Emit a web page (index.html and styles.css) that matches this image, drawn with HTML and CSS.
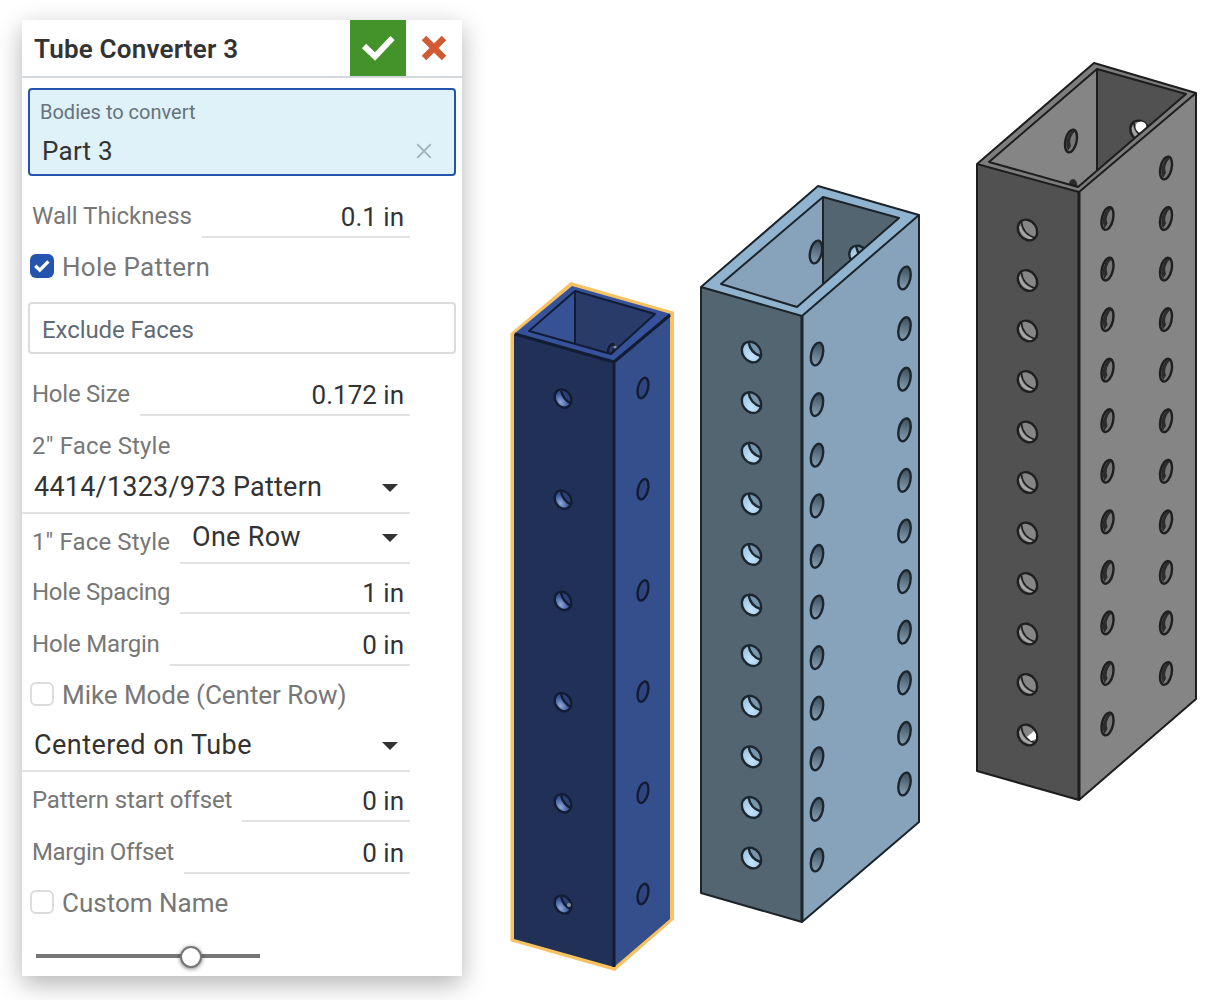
FILE: index.html
```html
<!DOCTYPE html>
<html lang="en">
<head>
<meta charset="utf-8">
<title>Tube Converter 3</title>
<link rel="stylesheet" href="styles.css">
</head>
<body>
<main class="workspace">
  <section class="panel">
    <header class="panel-header">
      <h1 class="title">Tube Converter 3</h1>
      <button class="accept" aria-label="Accept">
        <svg width="56" height="56" viewBox="0 0 56 56"><path d="M14 26 25 36.500 42.500 18" fill="none" stroke="#fff" stroke-width="6"/></svg>
      </button>
      <button class="cancel" aria-label="Cancel">
        <svg width="56" height="56" viewBox="0 0 56 56"><path d="M18 18 38 38M38 18 18 38" fill="none" stroke="#d15a34" stroke-width="6.4"/></svg>
      </button>
    </header>

    <div class="selection active">
      <div class="selection-label">Bodies to convert</div>
      <div class="selection-item">
        <span class="t-part">Part 3</span>
        <svg class="remove" width="16" height="16" viewBox="0 0 16 16"><path d="M1.2 1.2 14.8 14.8M14.8 1.2 1.2 14.8" stroke="#a3b1b8" stroke-width="1.8"/></svg>
      </div>
    </div>

    <div class="row first"><label>Wall Thickness</label><div class="value">0.1 in</div></div>
    <div class="check-row"><span class="checkbox checked"><svg width="24" height="24" viewBox="0 0 24 24"><path d="M5.3 11.8 9.8 16.2 18.4 7.4" fill="none" stroke="#fff" stroke-width="3.4"/></svg></span><span class="t-pattern">Hole Pattern</span></div>
    <div class="selection empty">Exclude Faces</div>
    <div class="row first"><label class="t-size">Hole Size</label><div class="value">0.172 in</div></div>
    <div class="stacked-label">2" Face Style</div>
    <div class="select"><span class="t-face-two">4414/1323/973 Pattern</span><i class="caret"></i></div>
    <div class="row short"><label class="t-face-one">1" Face Style</label><div class="select inline"><span>One Row</span><i class="caret"></i></div></div>
    <div class="row short"><label class="t-spacing">Hole Spacing</label><div class="value">1 in</div></div>
    <div class="row"><label class="t-margin">Hole Margin</label><div class="value">0 in</div></div>
    <div class="check-row"><span class="checkbox"></span><span class="t-mike">Mike Mode (Center Row)</span></div>
    <div class="select"><span class="t-centered">Centered on Tube</span><i class="caret"></i></div>
    <div class="row short"><label class="t-start">Pattern start offset</label><div class="value">0 in</div></div>
    <div class="row"><label class="t-margin-offset">Margin Offset</label><div class="value">0 in</div></div>
    <div class="check-row"><span class="checkbox"></span><span>Custom Name</span></div>
    <div class="slider"><span class="track"><span class="thumb"></span></span></div>
  </section>

  <svg class="viewport" width="758" height="1000" viewBox="462 0 758 1000">
    <defs>
      <linearGradient id="skySide" x1="0" y1="0" x2="0" y2="1"><stop offset="0" stop-color="#3e4d59"/><stop offset="1" stop-color="#86a0b5"/></linearGradient>
      <radialGradient id="skyFront" cx=".35" cy=".65" r=".6"><stop offset="0" stop-color="#c4e4fa"/><stop offset="1" stop-color="#9cc3e2"/></radialGradient>
      <radialGradient id="navyFront" cx=".25" cy=".6" r=".5"><stop offset="0" stop-color="#8fa8dc"/><stop offset="1" stop-color="#34508f"/></radialGradient>
      <clipPath id="skyBack"><path d="M823 197 899 218 823 284Z"/></clipPath>
      <clipPath id="grayBack"><path d="M1097 69 1186 94 1097 170Z"/></clipPath>
      <clipPath id="grayLeft"><path d="M989 162 1097 69V170L1078 187Z"/></clipPath>
      <g id="hole-navy-front">
        <ellipse rx="7.8" ry="9.6" transform="rotate(-32)" fill="url(#navyFront)"/>
        <path d="M-2-8Q5-11 8 0L8 5Q1 2-2-8Z" fill="#2b4178"/>
        <path d="M-2-8Q0 1 8 5" class="hole-line navy"/>
        <ellipse rx="7.8" ry="9.6" transform="rotate(-32)" class="hole-line navy"/>
      </g>
      <g id="hole-navy-side"><ellipse rx="5" ry="10.4" transform="rotate(14)" fill="#2e457d"/><ellipse rx="5" ry="10.4" transform="rotate(14)" class="hole-line navy"/></g>
      <g id="hole-sky-front">
        <ellipse rx="9" ry="11" transform="rotate(-35)" fill="url(#skyFront)"/>
        <path d="M-3-10Q6-12 9 0L9 4Q-1 1-3-10Z" fill="#7795ab"/>
        <path d="M-3-10Q-1 1 9 4" class="hole-line"/>
        <ellipse rx="9" ry="11" transform="rotate(-35)" class="hole-line"/>
      </g>
      <g id="hole-sky-side"><ellipse rx="5.8" ry="11.6" transform="rotate(13)" fill="url(#skySide)"/><ellipse rx="5.8" ry="11.6" transform="rotate(13)" class="hole-line"/></g>
      <g id="hole-gray-front">
        <ellipse rx="9" ry="11" transform="rotate(-35)" fill="#868686"/>
        <path d="M-8-4Q-6 6 5 9" fill="none" stroke="#a8a8a8" stroke-width="2.2"/>
        <path d="M-6-8Q-5 4 8 8" class="hole-line gray thin"/>
        <ellipse rx="9" ry="11" transform="rotate(-35)" class="hole-line gray"/>
      </g>
      <g id="hole-gray-side">
        <ellipse rx="5.6" ry="11.6" transform="rotate(13)" fill="#777"/>
        <path d="M1-11Q-8 0-3 10L0 5Q-3-2 4-10Z" fill="#2c2c2c"/>
        <ellipse rx="5.6" ry="11.6" transform="rotate(13)" class="hole-line gray"/>
      </g>
    </defs>

    <g class="tube navy">
      <path d="M514 335 571.500 286 670.500 314.500V918L614 967 514 938.500Z" fill="#36529a" stroke="#f8c262" stroke-width="7"/>
      <path d="M514 334 572 286 671 314 614 362Z" fill="#36529a"/>
      <path d="M514 334 614 362V967L514 939Z" fill="#203056"/>
      <path d="M614 362 670 314V919L614 967Z" fill="#354f8c"/>
      <path d="M529 331 575 291V344Z" fill="#375294"/>
      <path d="M575 291 655 314 611 354 575 344Z" fill="#293b69"/>
      <g class="edges"><path d="M529 331 575 291 655 314 611 354ZM575 291V344"/></g>
      <g class="edges strong"><path d="M515 334 614 362 670 315M614 362V967"/></g>
      <path d="M608 353Q608 345 613 344 617 347 612 353" class="hole-line navy"/>
      <circle cx="615" cy="347" r="1.6" fill="#8b8f99"/>
      <g data-hole="hole-navy-front" data-x="563" data-y="398.500" data-step="101.2" data-count="6"></g>
      <g data-hole="hole-navy-side" data-x="643" data-y="388" data-step="101.2" data-count="6"></g>
      <circle cx="569" cy="905" r="2" fill="#8b8f99"/>
    </g>

    <g class="tube sky">
      <path d="M701 287 818 186 919 215 802 316Z" fill="#90b3cf"/>
      <path d="M701 287 802 316V922L701 893Z" fill="#546572"/>
      <path d="M802 316 919 215V822L802 922Z" fill="#87a3bb"/>
      <path d="M721 284 823 197V284L797 307Z" fill="#87a3bb"/>
      <path d="M823 197 899 218 823 284Z" fill="#546572"/>
      <use href="#hole-sky-side" x="816" y="252"/>
      <g clip-path="url(#skyBack)"><use href="#hole-sky-front" x="859" y="256"/></g>
      <g class="edges"><path d="M721 284 823 197 899 218 797 307ZM823 197V284M701 287 818 186 919 215V822L802 922 701 893ZM701 287 802 316 919 215"/></g>
      <g class="edges strong"><path d="M802 316V921"/></g>
      <g data-hole="hole-sky-front" data-x="751.5" data-y="352" data-step="50.6" data-count="11"></g>
      <g data-hole="hole-sky-side" data-x="817" data-y="354" data-step="50.6" data-count="11"></g>
      <g data-hole="hole-sky-side" data-x="904.5" data-y="278" data-step="50.6" data-count="11"></g>
    </g>

    <g class="tube gray">
      <path d="M977 164 1094 63 1196 93 1079 192Z" fill="#7d7d7d"/>
      <path d="M977 164 1079 192V800L977 771Z" fill="#515151"/>
      <path d="M1079 192 1196 93V699L1079 800Z" fill="#858585"/>
      <path d="M989 162 1097 69V170L1078 187Z" fill="#858585"/>
      <path d="M1097 69 1186 94 1097 170Z" fill="#515151"/>
      <use href="#hole-gray-side" x="1071" y="141"/>
      <g clip-path="url(#grayBack)"><use href="#hole-gray-front" x="1140" y="131"/><circle cx="1141" cy="127" r="5.5" fill="#fff"/></g>
      <g clip-path="url(#grayLeft)"><ellipse cx="1073" cy="187" rx="4.500" ry="8" fill="#2c2c2c"/></g>
      <g class="edges"><path d="M989 162 1097 69 1186 94 1078 187ZM1097 69V170M977 164 1094 63 1196 93V699L1079 800 977 771ZM977 164 1079 192 1196 93"/></g>
      <g class="edges strong"><path d="M1079 192V799"/></g>
      <g data-hole="hole-gray-front" data-x="1027.5" data-y="230" data-step="50.5" data-count="11"></g>
      <g data-hole="hole-gray-side" data-x="1107.5" data-y="218.5" data-step="50.55" data-count="11"></g>
      <g data-hole="hole-gray-side" data-x="1166" data-y="168" data-step="50.55" data-count="11"></g>
      <path d="M1027 737 1034 731 1036 734 1036 739 1031 741Z" fill="#fff"/>
    </g>
  </svg>
</main>
<script src="holes.js"></script>
</body>
</html>
```
FILE: styles.css
```css
* { box-sizing: border-box; }
body {
  margin: 0;
  background: #fff;
  color: #333;
  font-family: Roboto, "Liberation Sans", sans-serif;
  font-size: 26px;
}
.workspace { display: flex; width: 1220px; height: 1000px; overflow: hidden; }
.panel {
  flex: none;
  width: 440px;
  height: 956px;
  margin: 20px 0 0 22px;
  background: #fff;
  box-shadow: 0 8px 24px rgba(0, 0, 0, .3);
  white-space: nowrap;
}
.viewport { flex: none; }

.panel-header { display: flex; height: 58px; border-bottom: 2px solid #d3d8dc; }
.title { flex: 1; margin: 0; padding: 1px 0 0 12px; font-size: 26px; font-weight: 600; line-height: 56px; letter-spacing: .2px; }
.accept, .cancel { width: 56px; height: 56px; padding: 0; border: 0; background: #fff; }
.accept { background: #43922a; }
.panel-header svg { display: block; }

.selection { margin: 0 6px; border: 2px solid #dcdcdc; border-radius: 4px; }
.selection.active { height: 88px; margin-top: 10px; padding: 6px 10px; background: #dff1f9; border-color: #2454ad; }
.selection-label { font-size: 20px; line-height: 32px; color: #66737b; }
.selection-item { display: flex; align-items: center; justify-content: space-between; height: 46px; padding: 0 12px 0 2px; }
.selection.empty { height: 52px; margin-top: 8px; padding: 1px 0 0 12px; line-height: 50px; font-size: 24px; letter-spacing: -.08px; color: #5f6b76; }

.row { display: flex; align-items: flex-end; gap: 10px; width: 388px; height: 52px; padding-left: 10px; }
.row.first { margin-top: 10px; }
.row.short { height: 50px; }
.row label { flex: none; height: 42px; line-height: 40px; font-size: 24px; color: #777; }
.value { flex: 1; height: 42px; padding-right: 6px; border-bottom: 2px solid #e2e2e2; line-height: 43px; text-align: right; }

.stacked-label { height: 48px; padding: 10px 0 0 10px; line-height: 40px; font-size: 24px; letter-spacing: .17px; color: #777; }
.select { display: flex; align-items: center; justify-content: space-between; width: 388px; height: 50px; padding: 0 12px 3px; border-bottom: 2px solid #e2e2e2; font-size: 27px; letter-spacing: .3px; }
.select.inline { flex: 1; width: auto; }
.caret { width: 16px; height: 8px; background: #333; clip-path: polygon(0 0, 100% 0, 50% 100%); margin-top: 3px; }

.check-row { display: flex; align-items: center; gap: 8px; height: 56px; padding-left: 8px; color: #777; }
.check-row span:last-child { padding-top: 2px; }
.checkbox { width: 24px; height: 24px; border: 2px solid #dcdcdc; border-radius: 6px; }
.checkbox.checked { border: 0; background: #2454ad; }
.checkbox svg { display: block; }

/* Tracking adjustments for individual labels */
.t-part { letter-spacing: .25px; }
.t-pattern { letter-spacing: .32px; }
.t-size { letter-spacing: -.25px; }
.t-face-one { letter-spacing: .13px; }
.t-face-two { letter-spacing: .22px; }
.t-spacing { letter-spacing: -.25px; }
.t-margin { letter-spacing: -.2px; }
.t-mike { letter-spacing: -.05px; }
.t-centered { letter-spacing: .45px; }
.t-start { letter-spacing: -.14px; }
.t-margin-offset { letter-spacing: -.37px; }

.slider { padding: 24px 0 0 14px; }
.track { display: flex; width: 224px; height: 4px; background: #777; padding-left: 144px; align-items: center; }
.thumb { flex: none; width: 22px; height: 22px; border: 2px solid #777; border-radius: 50%; background: #fff; box-shadow: 0 1px 4px rgba(0, 0, 0, .5); margin-top: 2px; }

.edges { fill: none; stroke: #1c2329; stroke-width: 2; stroke-linejoin: round; }
.edges.strong { stroke-width: 3; }
.navy .edges { stroke: #131c35; }
.gray .edges { stroke: #1d1d1d; }
.hole-line { fill: none; stroke: #1c262e; stroke-width: 2.4; }
.hole-line.navy { stroke: #131c35; }
.hole-line.gray { stroke: #1f1f1f; }
.hole-line.thin { stroke-width: 1.6; }
```
FILE: holes.js
```js
// Repeats a hole symbol down each column of a tube face.
document.querySelectorAll('[data-hole]').forEach(function (group) {
  var d = group.dataset;
  for (var i = 0; i < +d.count; i++) {
    var use = document.createElementNS('http://www.w3.org/2000/svg', 'use');
    use.setAttribute('href', '#' + d.hole);
    use.setAttribute('x', d.x);
    use.setAttribute('y', +d.y + i * d.step);
    group.appendChild(use);
  }
});
```
